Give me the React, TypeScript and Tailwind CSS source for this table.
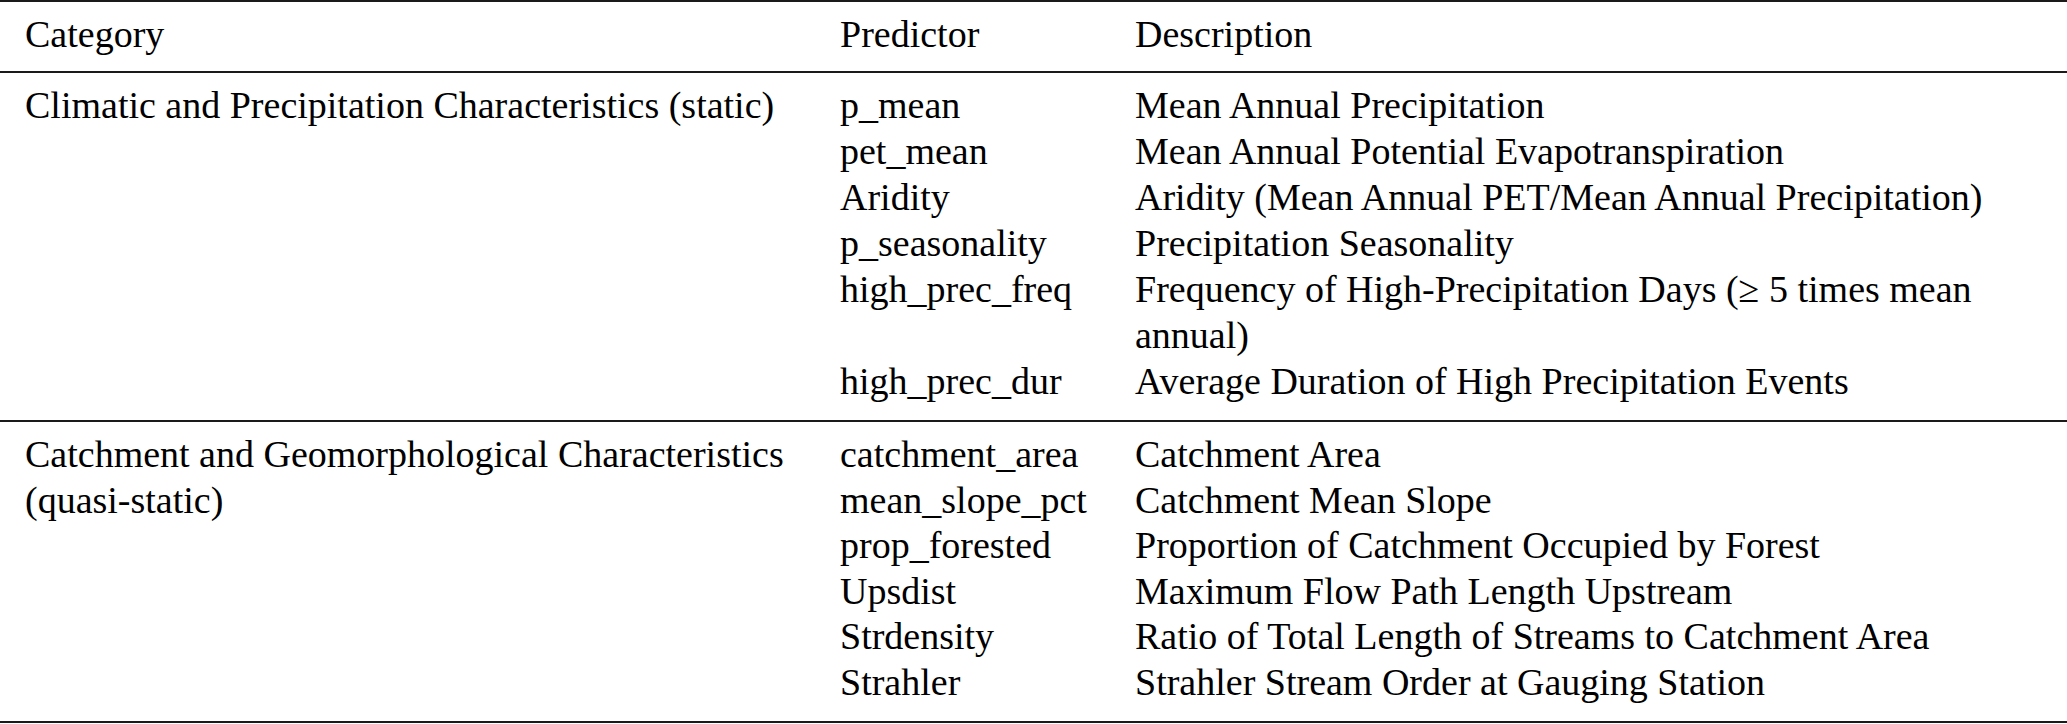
import * as React from "react";

// Predictor table: category / predictor / description, booktabs-style rules
const climatic = [
    { name: "p_mean", desc: "Mean Annual Precipitation" },
    { name: "pet_mean", desc: "Mean Annual Potential Evapotranspiration" },
    { name: "Aridity", desc: "Aridity (Mean Annual PET/Mean Annual Precipitation)" },
    { name: "p_seasonality", desc: "Precipitation Seasonality" },
    { name: "high_prec_freq", desc: "Frequency of High-Precipitation Days (≥ 5 times mean", more: "annual)" },
    { name: "high_prec_dur", desc: "Average Duration of High Precipitation Events" },
];

const catchment = [
    { name: "catchment_area", desc: "Catchment Area" },
    { name: "mean_slope_pct", desc: "Catchment Mean Slope" },
    { name: "prop_forested", desc: "Proportion of Catchment Occupied by Forest" },
    { name: "Upsdist", desc: "Maximum Flow Path Length Upstream" },
    { name: "Strdensity", desc: "Ratio of Total Length of Streams to Catchment Area" },
    { name: "Strahler", desc: "Strahler Stream Order at Gauging Station" },
];

type Row = { name: string; desc: string; more?: string };

const Rows = ({ rows, cat1, cat2 }: { rows: Array<Row>; cat1: string; cat2?: string }) => (
    <>
        {rows.map((r, i) => (
            <div key={r.name} className="grid grid-cols-[815px_295px_1fr]">
                <div className="h-0 whitespace-nowrap">
                    {i === 0 ? cat1 : null}
                    {i === 0 && cat2 ? <div>{cat2}</div> : null}
                </div>
                <div className="whitespace-nowrap">{r.name}</div>
                <div className="whitespace-nowrap">
                    {r.desc}
                    {r.more ? <div>{r.more}</div> : null}
                </div>
            </div>
        ))}
    </>
);

export default function App() {
    return (
        <div className="w-[2067px] h-[724px] overflow-hidden bg-white">
            <div className="text-black text-[38px] [font-family:'Liberation_Serif']">
                {/* header */}
                <div className="border-t-2 border-b-2 border-[#1a1a1a] pt-[9px] pb-[14px] pl-[25px] grid grid-cols-[815px_295px_1fr] leading-[46px]">
                    <div>Category</div>
                    <div>Predictor</div>
                    <div>Description</div>
                </div>

                <div className="border-b-2 border-[#1a1a1a] pl-[25px] pt-[9px] pb-[16px] leading-[46px]">
                    <Rows rows={climatic} cat1="Climatic and Precipitation Characteristics (static)" />
                </div>

                <div className="border-b-2 border-[#1a1a1a] pl-[25px] pt-[10px] pb-[16px] leading-[45.5px]">
                    <Rows rows={catchment} cat1="Catchment and Geomorphological Characteristics" cat2="(quasi-static)" />
                </div>
            </div>
        </div>
    );
}
